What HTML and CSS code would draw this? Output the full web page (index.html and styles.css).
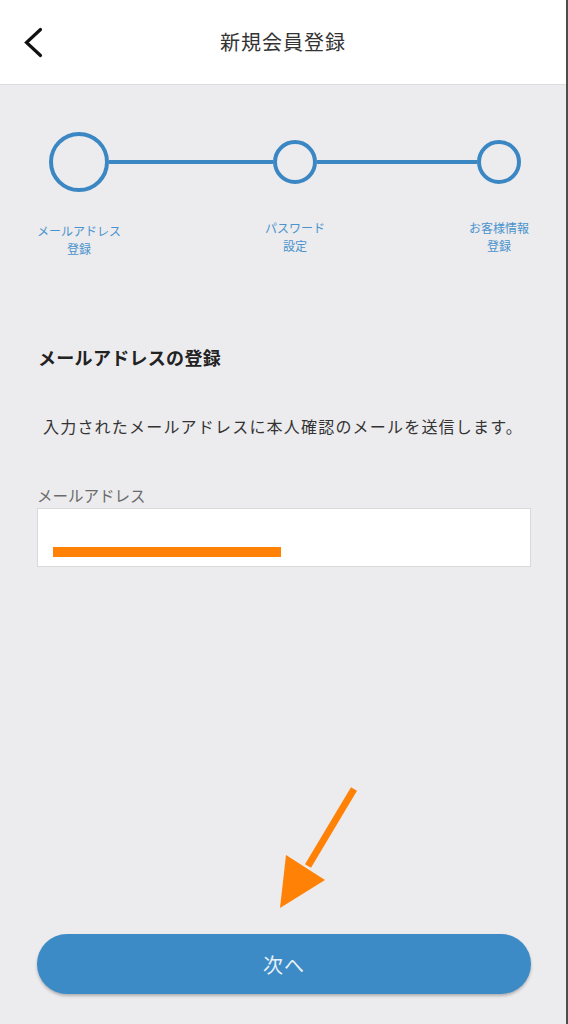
FILE: index.html
```html
<!DOCTYPE html>
<html>
<head>
  <meta charset="utf-8">
  <title>新規会員登録</title>
  <link rel="stylesheet" href="styles.css">
</head>
<body>
  <div class="header">
    <svg class="back" viewBox="0 0 60 84" width="60" height="84">
      <polyline points="40.5,29.5 26.5,42.5 40.5,55.5" fill="none" stroke="#111" stroke-width="3.2" stroke-linecap="round" stroke-linejoin="miter"/>
    </svg>
    <h1 class="title">新規会員登録</h1>
    <div></div>
  </div>

  <div class="main">
    <div class="stepper">
      <div class="step-circle big"></div>
      <div class="step-line"></div>
      <div class="step-circle"></div>
      <div class="step-line"></div>
      <div class="step-circle"></div>

      <div class="step-label first">メールアドレス<br>登録</div>
      <div class="step-label second">パスワード<br>設定</div>
      <div class="step-label third">お客様情報<br>登録</div>
    </div>

    <div class="form">
      <h2 class="section-title">メールアドレスの登録</h2>
      <p class="description">入力されたメールアドレスに本人確認のメールを送信します。</p>
      <label class="field-label">メールアドレス</label>
      <div class="input-box">
        <div class="redact"></div>
      </div>
    </div>

    <button class="next-button">次へ</button>

    <svg class="arrow" viewBox="0 0 100 140" width="100" height="140">
      <line x1="84" y1="9" x2="38" y2="86" stroke="#ff8206" stroke-width="7"/>
      <polygon points="16,75 55,100 10,128" fill="#ff8206"/>
    </svg>
  </div>
</body>
</html>
```

FILE: styles.css
```css
* {
  box-sizing: border-box;
}

body {
  margin: 0;
  width: 568px;
  min-height: 1024px;
  display: flex;
  flex-direction: column;
  font-family: "Noto Sans CJK JP", "Noto Sans", sans-serif;
  background-color: #ecebee;
  border-right: 2px solid #4d4d4d;
  color: #333;
}

.header {
  height: 85px;
  display: grid;
  grid-template-columns: 60px 1fr 60px;
  align-items: center;
  background-color: #fff;
  border-bottom: 1px solid #dcdcdc;
}

.back {
  display: block;
}

.title {
  margin: 0 0 1px 0;
  font-size: 20px;
  font-weight: 400;
  letter-spacing: 1px;
  text-align: center;
  color: #333;
}

.main {
  position: relative;
  flex: 1;
  display: flex;
  flex-direction: column;
  padding: 0 35px 30px 37px;
}

/* progress steps */
.stepper {
  display: grid;
  grid-template-columns: 60px 164px 44px 1fr 44px;
  grid-template-rows: 60px auto;
  align-items: center;
  row-gap: 27px;
  margin: 47px 10px 0 12px;
}

.step-circle {
  width: 44px;
  height: 44px;
  border: 4px solid #3a87c3;
  border-radius: 50%;
}

.step-circle.big {
  width: 60px;
  height: 60px;
}

.step-line {
  height: 4px;
  background-color: #3a87c3;
}

.step-label {
  align-self: start;
  margin: 0 -40px;
  font-size: 12px;
  line-height: 18px;
  text-align: center;
  color: #4a93cc;
  white-space: nowrap;
}

.step-label.first {
  grid-column: 1;
  margin-top: 3px;
}

.step-label.second {
  grid-column: 3;
}

.step-label.third {
  grid-column: 5;
}

/* form */
.form {
  display: flex;
  flex-direction: column;
}

.section-title {
  margin: 87px 0 0 1px;
  font-size: 18px;
  font-weight: 700;
  line-height: 24px;
  letter-spacing: 0.3px;
  color: #222;
}

.description {
  margin: 45px 0 0 6px;
  font-size: 16px;
  line-height: 24px;
  letter-spacing: 1.2px;
  color: #333;
}

.field-label {
  margin-top: 46px;
  font-size: 15.5px;
  line-height: 22px;
  color: #6b6b6b;
}

.input-box {
  height: 59px;
  margin-top: 2px;
  padding: 38px 0 0 15px;
  background-color: #fff;
  border: 1px solid #d9d9dc;
}

.redact {
  width: 228px;
  height: 10px;
  background-color: #ff8206;
}

.next-button {
  margin-top: auto;
  height: 60px;
  border: none;
  border-radius: 30px;
  background-color: #3d8bc6;
  color: #e9f1f8;
  font-family: inherit;
  font-size: 20px;
  letter-spacing: 1px;
  box-shadow: 0 2px 3px rgba(0, 0, 0, 0.25);
}

.arrow {
  position: absolute;
  left: 270px;
  top: 695px;
}
```
